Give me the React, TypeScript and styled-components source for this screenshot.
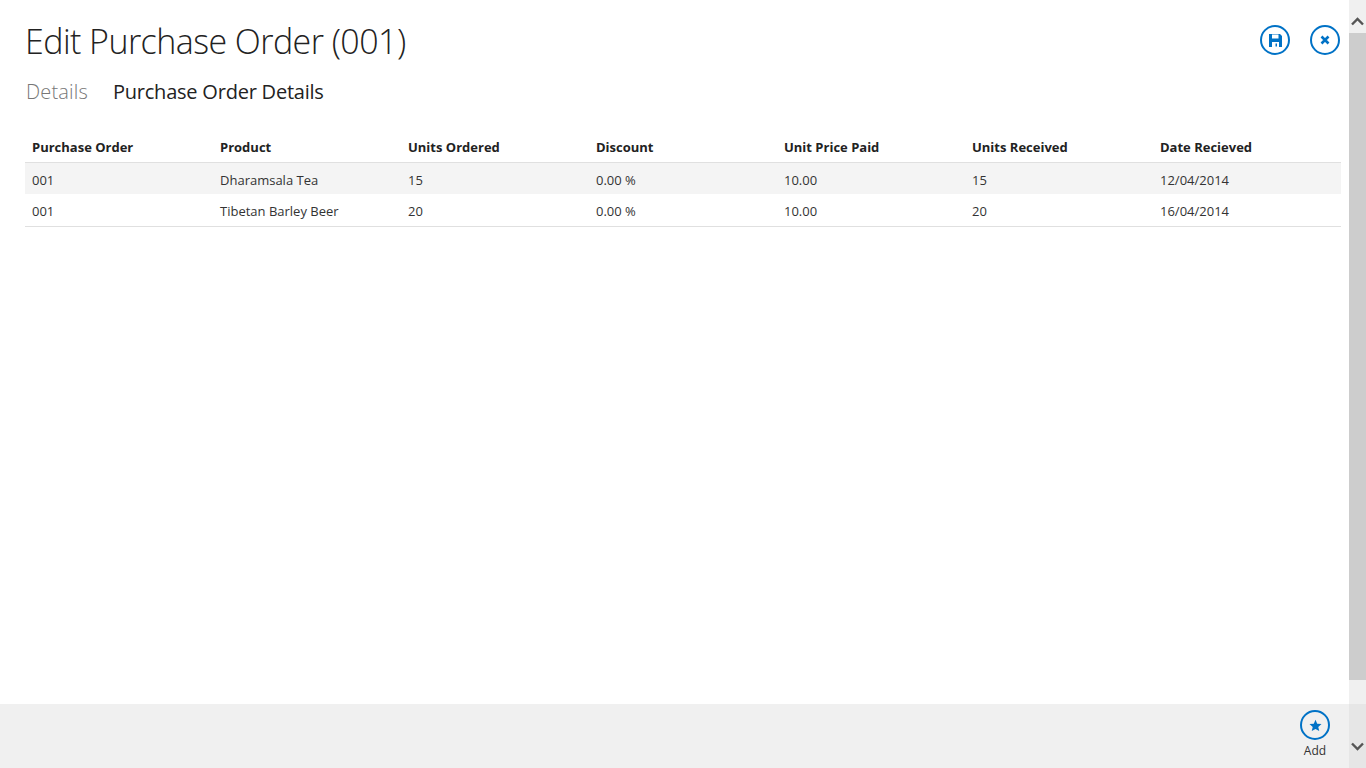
import React from "react";
import styled, { createGlobalStyle } from "styled-components";

const columns = [
  "Purchase Order",
  "Product",
  "Units Ordered",
  "Discount",
  "Unit Price Paid",
  "Units Received",
  "Date Recieved",
];

const rows = [
  ["001", "Dharamsala Tea", "15", "0.00 %", "10.00", "15", "12/04/2014"],
  ["001", "Tibetan Barley Beer", "20", "0.00 %", "10.00", "20", "16/04/2014"],
];

const App = () => {
  return (
    <Page>
      <GlobalStyle />
      <Main>
        <Content>
          <Header>
            <Title>Edit Purchase Order (001)</Title>
            <Actions>
              <RoundButton aria-label="Save">
                <svg width="13" height="13" viewBox="0 0 13 13">
                  <path
                    fill="#0072c6"
                    fillRule="evenodd"
                    d="M0 0h11l2 2v11H0z M3 0.5v4h6.5v-4z M3 8v5h7V8z M6.5 9.5h1.5v3H6.5z"
                  />
                </svg>
              </RoundButton>
              <RoundButton aria-label="Close">
                <svg width="10" height="10" viewBox="0 0 10 10">
                  <path d="M1.5 1.5l7 7M8.5 1.5l-7 7" stroke="#0072c6" strokeWidth="2.6" fill="none" />
                </svg>
              </RoundButton>
            </Actions>
          </Header>
          <Tabs>
            <Tab>Details</Tab>
            <Tab $active>Purchase Order Details</Tab>
          </Tabs>
          <Table>
            <thead>
              <tr>
                {columns.map((col) => (
                  <HeadCell key={col}>{col}</HeadCell>
                ))}
              </tr>
            </thead>
            <tbody>
              {rows.map((row, idx) => (
                <Row key={row[1]} $shaded={idx === 0}>
                  {row.map((value, i) => (
                    <Cell key={i}>{value}</Cell>
                  ))}
                </Row>
              ))}
            </tbody>
          </Table>
        </Content>
        <Footer>
          <FooterCommand>
            <RoundButton aria-label="Add">
              <svg width="13" height="13" viewBox="0 0 16 16">
                <path
                  fill="#0072c6"
                  d="M8 .8l2.1 4.9 5.3.5-4 3.5 1.2 5.2L8 12.2l-4.6 2.7 1.2-5.2-4-3.5 5.3-.5z"
                />
              </svg>
            </RoundButton>
            <CommandLabel>Add</CommandLabel>
          </FooterCommand>
        </Footer>
      </Main>
      <Scrollbar>
        <ScrollUp>
          <svg width="13" height="9" viewBox="0 0 13 9">
            <path d="M1 7.5l5.5-5.5 5.5 5.5" stroke="#555" strokeWidth="2.4" fill="none" />
          </svg>
        </ScrollUp>
        <ScrollThumb />
        <ScrollTrack />
        <ScrollDown>
          <svg width="13" height="9" viewBox="0 0 13 9">
            <path d="M1 1.5l5.5 5.5 5.5-5.5" stroke="#555" strokeWidth="2.4" fill="none" />
          </svg>
        </ScrollDown>
      </Scrollbar>
    </Page>
  );
};
export default App;

const GlobalStyle = createGlobalStyle`
  html, body {
    margin: 0;
    padding: 0;
    overflow: hidden;
    background: #fff;
  }
`;

const Page = styled.div`
  display: flex;
  width: 1366px;
  height: 768px;
  font-family: "Open Sans", "Noto Sans", "Liberation Sans", sans-serif;
  color: #222;
`;
const Main = styled.div`
  flex: 1;
  display: flex;
  flex-direction: column;
  min-width: 0;
`;
const Content = styled.div`
  flex: 1;
  padding: 0 8px 0 25px;
`;
const Header = styled.div`
  display: flex;
  justify-content: space-between;
  align-items: flex-start;
  height: 66px;
`;
const Title = styled.h1`
  margin: 16px 0 0;
  font-size: 34px;
  line-height: 50px;
  font-weight: 300;
  color: #222;
  letter-spacing: -0.56px;
`;
const Actions = styled.div`
  display: flex;
  gap: 20px;
  margin: 25px 1px 0 0;
`;
const RoundButton = styled.button`
  display: flex;
  align-items: center;
  justify-content: center;
  width: 30px;
  height: 30px;
  padding: 0;
  border: 2px solid #0072c6;
  border-radius: 50%;
  background: transparent;
`;
const Tabs = styled.div`
  display: flex;
  gap: 25px;
  height: 51px;
  padding: 1px 0 0 1px;
  box-sizing: border-box;
`;
const Tab = styled.span<{ $active?: boolean }>`
  font-size: 20px;
  line-height: 50px;
  font-weight: ${(p) => (p.$active ? 400 : 300)};
  color: ${(p) => (p.$active ? "#222" : "#777")};
  letter-spacing: ${(p) => (p.$active ? "-0.22px" : "0.17px")};
`;
const Table = styled.table`
  width: 1316px;
  table-layout: fixed;
  border-collapse: collapse;
  font-size: 13px;
`;
const HeadCell = styled.th`
  box-sizing: border-box;
  height: 45px;
  padding: 0 0 6px 7px;
  width: 188px;
  text-align: left;
  vertical-align: bottom;
  font-weight: 700;
  color: #222;
  border-bottom: 1px solid #e0e0e0;
`;
const Row = styled.tr<{ $shaded: boolean }>`
  background: ${(p) => (p.$shaded ? "#f4f4f4" : "#fff")};
  &:last-child {
    border-bottom: 1px solid #e0e0e0;
  }
`;
const Cell = styled.td`
  box-sizing: border-box;
  height: 32px;
  padding: 4px 0 0 7px;
  color: #333;
  tr:last-child > & {
    padding-top: 2px;
  }
`;
const Footer = styled.div`
  display: flex;
  justify-content: flex-end;
  height: 64px;
  background: #f0f0f0;
`;
const FooterCommand = styled.div`
  display: flex;
  flex-direction: column;
  align-items: center;
  width: 68px;
  padding-top: 6px;
`;
const CommandLabel = styled.span`
  margin-top: 3px;
  font-size: 12px;
  line-height: 16px;
  color: #333;
`;
const Scrollbar = styled.div`
  display: flex;
  flex-direction: column;
  width: 17px;
  background: #f0f0f0;
`;
const ScrollUp = styled.div`
  display: flex;
  align-items: center;
  justify-content: center;
  height: 33px;
  padding-top: 9px;
  box-sizing: border-box;
`;
const ScrollThumb = styled.div`
  height: 647px;
  background: #cdcdcd;
`;
const ScrollTrack = styled.div`
  flex: 1;
`;
const ScrollDown = styled.div`
  display: flex;
  align-items: center;
  justify-content: center;
  height: 64px;
  padding-top: 20px;
  box-sizing: border-box;
  background: #e6e6e6;
`;
